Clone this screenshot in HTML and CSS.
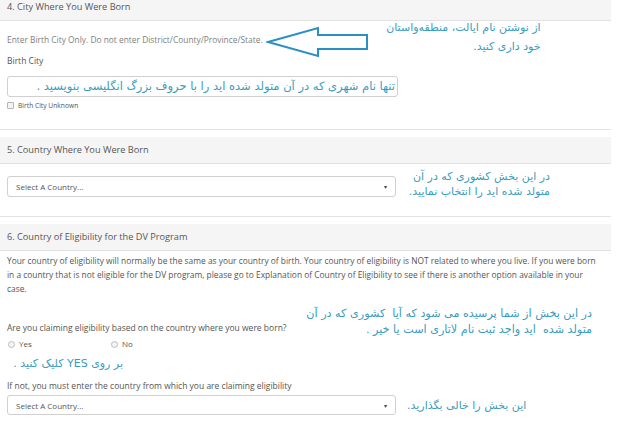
FILE: index.html
```html
<!DOCTYPE html>
<html lang="en">
<head>
<meta charset="utf-8">
<title>DV Form</title>
<link rel="stylesheet" href="styles.css">
</head>
<body>
<div class="page">
  <section class="panel">
    <div class="panel-head">4. City Where You Were Born</div>
    <div class="panel-body body-city">
      <div class="hint-row">
        <span class="hint">Enter Birth City Only. Do not enter District/County/Province/State.</span>
        <svg class="arrow" width="104" height="32" viewBox="0 0 104 32">
          <path d="M2 16 L52 2 L52 9 L101 9 L101 23 L52 23 L52 30 Z" fill="none" stroke="#2b8fc4" stroke-width="2" stroke-linejoin="miter"/>
        </svg>
        <div class="note note-city" dir="rtl">از نوشتن نام ایالت، منطقه‌واستان<br>خود داری کنید.</div>
      </div>
      <div class="label">Birth City</div>
      <div class="text-input" dir="rtl">تنها نام شهری که در آن متولد شده اید را با حروف بزرگ انگلیسی بنویسید .</div>
      <label class="check-row"><span class="checkbox"></span>Birth City Unknown</label>
    </div>
  </section>

  <section class="panel">
    <div class="panel-head">5. Country Where You Were Born</div>
    <div class="panel-body body-country">
      <div class="select-row">
        <div class="select"><span>Select A Country...</span><span class="caret">▾</span></div>
        <div class="note note-country" dir="rtl">در این بخش کشوری که در آن<br>متولد شده اید را انتخاب نمایید.</div>
      </div>
    </div>
  </section>

  <section class="panel panel-last">
    <div class="panel-head">6. Country of Eligibility for the DV Program</div>
    <div class="panel-body body-elig">
      <p class="para">Your country of eligibility will normally be the same as your country of birth. Your country of eligibility is NOT related to where you live. If you were born in a country that is not eligible for the DV program, please go to Explanation of Country of Eligibility to see if there is another option available in your case.</p>
      <div class="question-block">
        <div class="label">Are you claiming eligibility based on the country where you were born?</div>
        <div class="radios">
          <label class="radio-opt"><span class="radio"></span>Yes</label>
          <label class="radio-opt"><span class="radio"></span>No</label>
        </div>
        <div class="note note-yes" dir="rtl">بر روی YES کلیک کنید .</div>
        <div class="note note-elig" dir="rtl">در این بخش از شما پرسیده می شود که آیا&nbsp; کشوری که در آن<br>متولد شده&nbsp; اید واجد ثبت نام لاتاری است یا خیر .</div>
      </div>
      <div class="label q2">If not, you must enter the country from which you are claiming eligibility</div>
      <div class="select-row select-row-last">
        <div class="select"><span>Select A Country...</span><span class="caret">▾</span></div>
        <div class="note note-empty" dir="rtl">این بخش را خالی بگذارید.</div>
      </div>
    </div>
  </section>
</div>
</body>
</html>
```

FILE: styles.css
```css
html, body {
  margin: 0;
  padding: 0;
  background: #ffffff;
}
body {
  font-family: "Open Sans", "Noto Sans", sans-serif;
  color: #555555;
  width: 624px;
  height: 423px;
  overflow: hidden;
}
.page {
  width: 611px;
  margin-top: -6px;
  display: flex;
  flex-direction: column;
  gap: 7px;
}
.panel {
  border-bottom: 1px solid #e3e3e3;
  background: #fff;
}
.panel-last {
  border-bottom: none;
}
.panel-head {
  height: 26px;
  line-height: 26px;
  background: #f5f5f5;
  border-bottom: 1px solid #e1e1e1;
  padding-left: 7px;
  font-size: 9.2px;
  color: #555;
}
.panel-body {
  padding: 0 7px;
}
.body-city {
  height: 108px;
}
.hint-row {
  display: flex;
  align-items: flex-start;
  height: 33px;
}
.hint {
  margin-top: 13px;
  line-height: 12px;
  font-size: 8.4px;
  color: #808080;
  white-space: nowrap;
}
.arrow {
  margin-top: 5px;
  margin-left: 3px;
  flex: none;
}
.note {
  font-family: "DejaVu Sans", sans-serif;
  color: #3a9cbc;
  white-space: nowrap;
}
.note-city {
  margin-top: -3px;
  margin-left: 5px;
  font-size: 11px;
  line-height: 19px;
  width: 166px;
  text-align: right;
}
.label {
  font-size: 8.5px;
  line-height: 14px;
  color: #555;
  white-space: nowrap;
}
.text-input {
  margin-top: 8px;
  width: 387px;
  height: 19px;
  border: 1px solid #d0d0d0;
  border-radius: 3px;
  font-family: "DejaVu Sans", sans-serif;
  font-size: 11.5px;
  line-height: 19px;
  color: #3a9cbc;
  padding-right: 2px;
  text-align: right;
  white-space: nowrap;
  overflow: hidden;
}
.check-row {
  display: flex;
  align-items: center;
  margin-top: 3px;
  height: 10px;
  font-size: 6.7px;
  color: #555;
}
.checkbox {
  width: 5px;
  height: 5px;
  border: 1px solid #b5b5b5;
  border-radius: 1px;
  background: #f3f3f3;
  margin-right: 4px;
}
.body-country {
  padding-top: 12px;
  padding-bottom: 19px;
}
.select-row {
  display: flex;
  align-items: flex-start;
}
.select {
  width: 371px;
  height: 19px;
  border: 1px solid #d0d0d0;
  border-radius: 3px;
  padding: 0 8px;
  display: flex;
  justify-content: space-between;
  align-items: center;
  font-size: 8px;
  color: #555;
  flex: none;
}
.caret {
  font-family: "DejaVu Sans", sans-serif;
  font-size: 6px;
  color: #444;
}
.note-country {
  margin: -7px 0 -9px 11px;
  width: 143px;
  text-align: right;
  font-size: 11px;
  line-height: 15px;
}
.body-elig {
  padding-top: 3px;
  padding-bottom: 3px;
}
.para {
  margin: 0;
  font-size: 8.4px;
  line-height: 14px;
  color: #555;
}
.question-block {
  position: relative;
  margin-top: 25px;
}
.note-elig {
  position: absolute;
  top: -15px;
  right: 12px;
  text-align: right;
  font-size: 11.2px;
  line-height: 16px;
}
.radios {
  display: flex;
  margin-top: 3px;
  font-size: 8px;
  line-height: 12px;
}
.radio-opt {
  display: flex;
  align-items: center;
  width: 103px;
}
.radio {
  width: 5px;
  height: 5px;
  border: 1px solid #bdbdbd;
  border-radius: 50%;
  background: #f4f4f4;
  margin: 0 4px 0 1px;
}
.note-yes {
  margin-top: 5px;
  margin-left: 10px;
  width: 106px;
  text-align: right;
  font-size: 11px;
  line-height: 18px;
}
.q2 {
  margin-top: 6px;
}
.select-row-last {
  margin-top: 2px;
  align-items: center;
}
.select-row-last .select {
  height: 18px;
}
.note-empty {
  margin-left: 11px;
  font-size: 11px;
  line-height: 15px;
}
```
